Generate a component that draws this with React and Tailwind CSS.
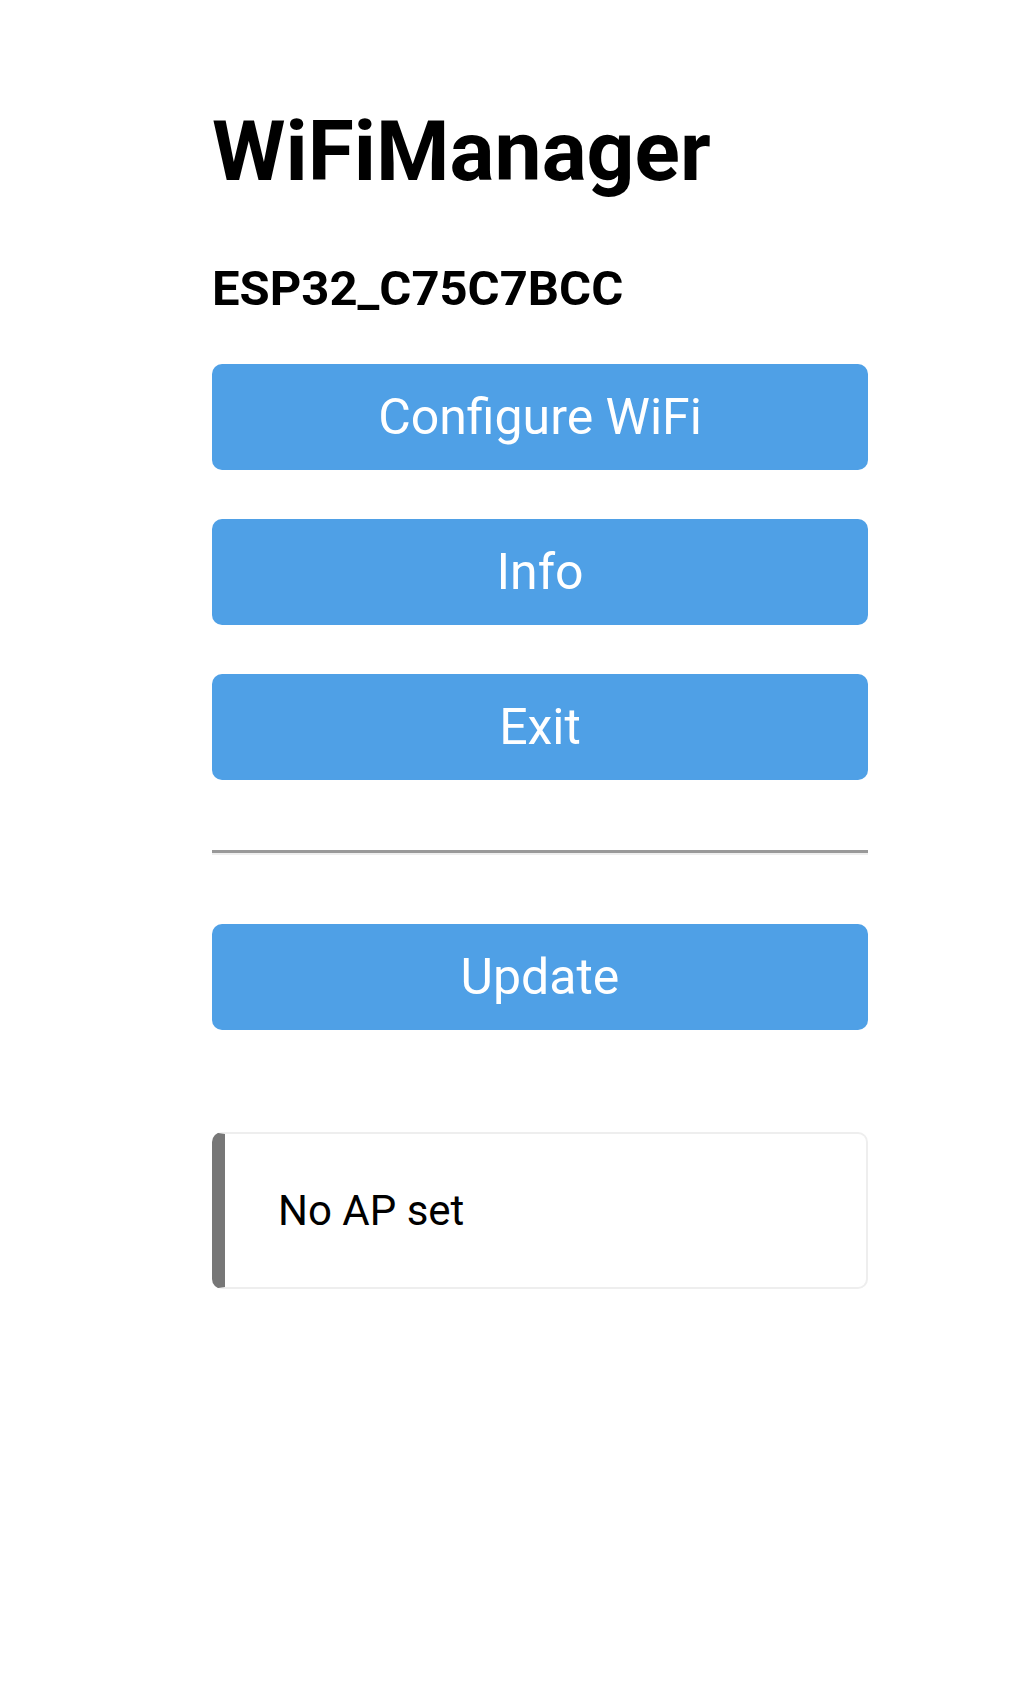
import React from "react";

const buttons = ["Configure WiFi", "Info", "Exit"];

const MenuButton = ({ label }) => (
  <button className="w-full h-[106px] rounded-[10px] bg-[#4fa0e6] text-white text-[50px] leading-[106px] text-center">
    {label}
  </button>
);

export default function App() {
  return (
    <div className="min-h-[1697px] bg-white text-black font-['Roboto',sans-serif]">
      <div className="ml-[212px] w-[656px] pt-[110px]">
        <h1 className="text-[84px] leading-[84px] font-bold">WiFiManager</h1>
        <h3 className="mt-[70px] text-[49px] leading-[49px] font-bold">ESP32_C75C7BCC</h3>

        <div className="mt-[51px] flex flex-col gap-[49px]">
          {buttons.map((b) => (
            <MenuButton key={b} label={b} />
          ))}
        </div>

        <hr className="mt-[70px] border-0 border-t-[3px] border-t-[#999] border-b-2 border-b-[#eee]" />

        <div className="mt-[69px]">
          <MenuButton label="Update" />
        </div>

        <div className="mt-[102px] h-[157px] flex items-center rounded-[10px] border-2 border-[#eee] border-l-[13px] border-l-[#777] pl-[53px]">
          <span className="text-[42px] leading-[42px]">No AP set</span>
        </div>
      </div>
    </div>
  );
}
